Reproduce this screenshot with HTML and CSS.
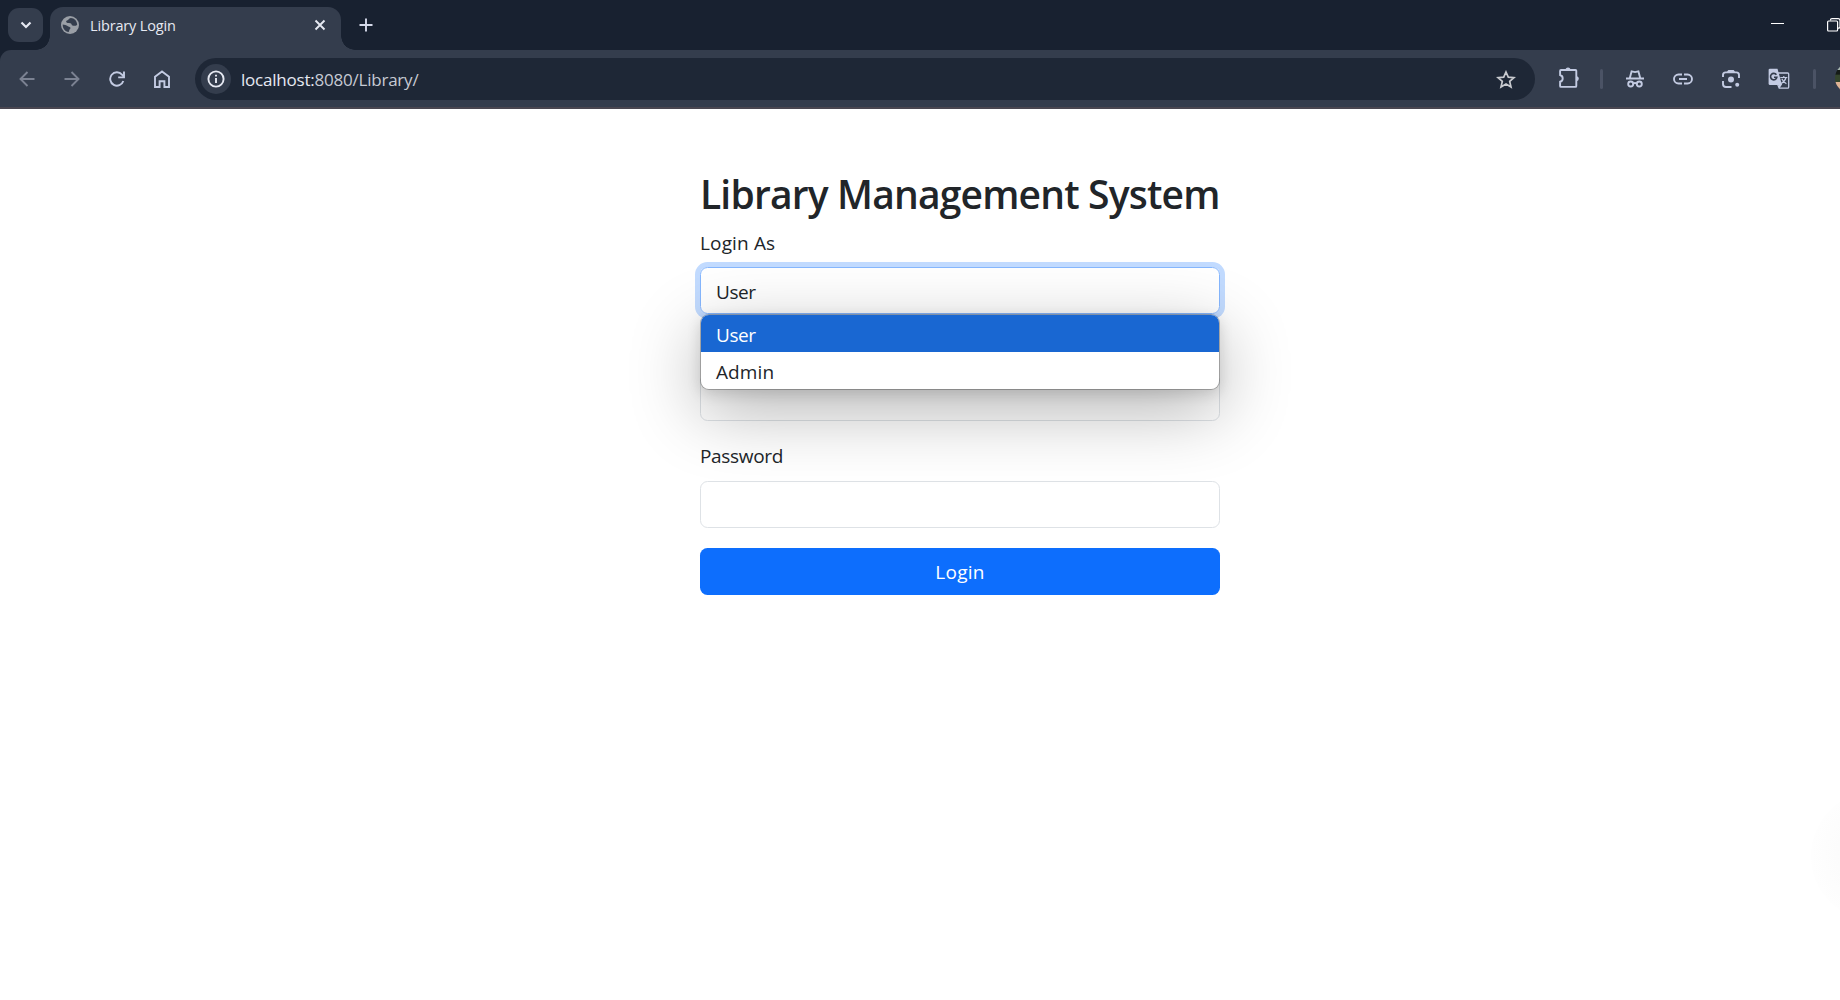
FILE: index.html
```html
<!DOCTYPE html>
<html lang="en">
<head>
<meta charset="utf-8">
<title>Library Login</title>
<link rel="stylesheet" href="styles.css">
</head>
<body>
<header class="browser">
  <div class="tabstrip">
    <div class="tab-search"><svg width="12" height="8" viewBox="0 0 12 8"><path d="M1.5 1.5 6 6l4.500-4.500" fill="none" stroke="#e6e9f2" stroke-width="2.200"/></svg></div>
    <div class="tab">
      <svg class="favicon" width="18" height="18" viewBox="0 0 18 18"><circle cx="9" cy="9" r="9" fill="#9a9fa6"/><path d="M9.800 2C7.500 2.200 7.800 4 6 4.600 4.600 5 5 6.800 6.600 7c2 .2 3.600-.3 4 1.500.4 1.300 2 1.400 3.400 1.300 1 0 1.800-.5 2.200-1C16 5 13.500 2.200 9.800 2ZM1.700 8.500c1.600.6 3.900.5 4.800 1.500.8 1 2.500.7 3 1.800.3.900-1 1.400-1.200 2.300-.1.900-.3 1.600-.7 2C4 15.500 1.600 12.500 1.700 8.500Z" fill="#343d4d"/></svg>
      <span class="tab-title">Library Login</span>
      <svg class="close" width="12" height="12" viewBox="0 0 12 12"><path d="M1.500 1.500l9 9M10.500 1.500l-9 9" stroke="#e6e9f2" stroke-width="1.900"/></svg>
    </div>
    <svg class="new-tab" width="14" height="14" viewBox="0 0 14 14"><path d="M7 .5v13M.5 7h13" stroke="#d5daea" stroke-width="1.900"/></svg>
    <div class="window-controls">
      <svg class="minimize" width="13" height="1" viewBox="0 0 13 1"><path d="M0 .5h13" stroke="#fff"/></svg>
      <svg class="restore" width="16" height="14" viewBox="0 0 16 14"><path d="M3.500 2.500V2Q3.500.7 5 .7h6q2 0 2 2v6q0 1.500-2 1.500" fill="none" stroke="#fff" stroke-width="1.200"/><rect x=".6" y="3" width="10" height="10" rx="1" fill="#182130" stroke="#fff" stroke-width="1.200"/></svg>
    </div>
  </div>
  <div class="toolbar">
    <div class="nav dim"><svg width="16" height="16" viewBox="0 0 16 16"><path d="M15.500 8H1.800M8.500 1 1.500 8l7 7"/></svg></div>
    <div class="nav dim"><svg width="16" height="16" viewBox="0 0 16 16"><path d="M.5 8h13.700M7.500 1l7 7-7 7"/></svg></div>
    <div class="nav"><svg width="16" height="16" viewBox="0 0 16 16"><path d="M14.300 10A6.700 6.700 0 1 1 13 3.600l1.500 1.800"/><path d="M15 .5V6.400H9.200" /></svg></div>
    <div class="nav"><svg width="16" height="18" viewBox="0 0 16 18"><path d="M1 6.800 8 1.400l7 5.400V17h-4.600v-5.800H5.600V17H1Z"/></svg></div>
    <div class="omnibox">
      <div class="site-info"><svg width="18" height="18" viewBox="0 0 18 18"><circle cx="9" cy="9" r="7.600"/><path d="M9 8v5M9 4.700v1.800"/></svg></div>
      <span class="url"><span class="host">localhost:</span>8080/Library/</span>
      <svg class="star" width="20" height="19" viewBox="0 0 20 19"><path d="M10 2l2.300 5.200 5.700.5-4.300 3.700 1.300 5.600-5-3-5 3 1.300-5.600L2 7.700l5.700-.5Z"/></svg>
    </div>
    <div class="action ext"><svg width="22" height="22" viewBox="0 0 22 22"><path d="M3 3h14.500q.8 0 .8.800V19q0 .9-.8.900H3q-.9 0-.9-.9v-4.200q2.600-.6 2.600-3.300T2.100 8V3.900Q2.100 3 3 3Z"/><path d="M7.500 3a2.500 2.500 0 0 1 5 0ZM18.300 9.200a2.500 2.500 0 0 1 0 5Z" class="solid"/></svg></div>
    <i class="rule"></i>
    <div class="action"><svg width="20" height="20" viewBox="0 0 20 20"><path d="M1 9.500h18M4.800 9 6.600 2.400l3.400.7 3.400-.7L15.200 9"/><circle cx="5.700" cy="15" r="2.500"/><circle cx="14.300" cy="15" r="2.500"/><path d="M8.300 14.500q1.700-1 3.400 0"/></svg></div>
    <div class="action"><svg width="20" height="12" viewBox="0 0 20 12"><path d="M9 1.500H5.500a4.500 4.500 0 0 0 0 9H9M11 1.500h3.500a4.500 4.500 0 0 1 0 9H11M6 6h8"/></svg></div>
    <div class="action"><svg width="20" height="20" viewBox="0 0 20 20"><path d="M2 8V6q0-2.600 2.600-2.600h10.800Q18 3.400 18 6v3M2 12v3q0 3 3 3h5.500M6.500 3.400 7.800 2h4.400l1.300 1.400"/><circle cx="10" cy="10.500" r="3" class="solid"/><circle cx="16.200" cy="15.800" r="2" class="solid"/></svg></div>
    <div class="action"><svg width="22" height="22" viewBox="0 0 22 22"><path d="M10 5h9.700q1 0 1 1v13q0 1.200-1 1.200h-8.500L9.500 16" stroke-width="1.300"/><path d="M2 .8h7.500L14 17H2Q.6 17 .6 15.500V2Q.6.800 2 .8Z" class="solid"/><path d="M10.500 16.500h3.500l-2.600 4Z" class="solid"/><path d="M8.400 6.800A3.200 3.200 0 1 0 8.900 9.200H6" class="cut"/><path d="M12.300 9.500h7M15.800 8v1.500M18 9.500q-1 4-5 6M13.800 10.800q1.500 3.400 4.600 5" class="thin"/></svg></div>
    <i class="rule last"></i>
    <div class="avatar"></div>
  </div>
</header>
<main class="page">
  <form class="login">
    <h1>Library Management System</h1>
    <label class="lbl-as">Login As</label>
    <div class="field select">User
      <div class="options">
        <div class="option selected">User</div>
        <div class="option admin">Admin</div>
      </div>
    </div>
    <label class="covered"></label>
    <div class="field"></div>
    <label class="lbl-pw">Password</label>
    <div class="field"></div>
    <button type="button" class="submit">Login</button>
  </form>
  <div class="halo"></div>
</main>
</body>
</html>
```
FILE: styles.css
```css
* { box-sizing: border-box; }
body {
  margin: 0;
  height: 1000px;
  overflow: hidden;
  display: flex;
  flex-direction: column;
  background: #fff;
  font-family: "Open Sans", "Noto Sans", sans-serif;
  color: #212529;
}
svg { display: block; flex: none; }

.browser { height: 109px; flex: none; background: #182130; overflow: hidden; }
.tabstrip { height: 50px; display: flex; align-items: center; padding-left: 8px; }
.tab-search {
  width: 35px; height: 34px; border-radius: 11px; background: #343d4d;
  display: flex; align-items: center; justify-content: center; padding-left: 1px;
}
.tab {
  position: relative;
  width: 291px; height: 43px; margin: 7px 0 0 7px; padding: 0 15px 7px 11px;
  background: #343d4d; border-radius: 13px 13px 0 0;
  display: flex; align-items: center;
}
.tab::before, .tab::after {
  content: ""; position: absolute; bottom: 0; width: 14px; height: 14px;
}
.tab::before { left: -14px; background: radial-gradient(circle at 0 0, transparent 13.500px, #343d4d 14px); }
.tab::after { right: -14px; background: radial-gradient(circle at 100% 0, transparent 13.500px, #343d4d 14px); }
.tab-title { margin-left: 11px; padding-top: 2px; font-size: 14.500px; letter-spacing: -.15px; line-height: 20px; color: #e6e9f2; white-space: nowrap; flex: 1; }
.new-tab { margin-left: 18px; }
.window-controls { margin-left: auto; width: 69px; display: flex; align-items: center; gap: 43px; }
.minimize { margin-bottom: 3px; }

.toolbar {
  height: 59px; width: 1880px; padding: 0 0 2px 5px;
  background: #343d4d; border-bottom: 2px solid #4a4751; border-radius: 11px 0 0 0;
  display: flex; align-items: center;
}
.toolbar svg { fill: none; stroke: #c3cbe2; stroke-width: 1.900; }
.toolbar svg .solid { fill: #c3cbe2; stroke: none; }
.toolbar svg .cut { stroke: #343d4d; stroke-width: 1.600; }
.toolbar svg .thin { stroke-width: 1.200; }
.nav { width: 45px; flex: none; display: flex; justify-content: center; padding: 2px 1px 0 0; }
.toolbar .dim svg { stroke: #7b8292; }
.omnibox {
  width: 1340px; height: 42px; flex: none; margin: 3px 0 0 10px; padding: 0 19px 0 6px;
  border-radius: 21px; background: #1e2736;
  display: flex; align-items: center;
}
.site-info { width: 30px; height: 30px; border-radius: 50%; background: #343d4d; display: flex; align-items: center; justify-content: center; }
.toolbar .site-info svg { stroke: #e6e9f2; }
.url { flex: 1; margin-left: 10px; padding-top: 2px; font-size: 17px; letter-spacing: -.22px; line-height: 24px; color: #c6cad3; }
.host { color: #e6e9f2; }
.toolbar .star { stroke: #c8cacf; stroke-width: 1.700; }
.action { width: 48px; flex: none; display: flex; justify-content: center; padding-top: 3px; }
.ext { width: 46px; margin-left: 10px; padding: 1px 0 0 2px; }
.rule { width: 3px; height: 20px; flex: none; margin: 2px 8px 0 9px; border-radius: 2px; background: #4b5365; }
.rule.last { margin: 2px 9px 0 10px; }
.avatar {
  width: 30px; height: 30px; flex: none; margin-left: 10px; border-radius: 50%;
  background: linear-gradient(#a7b7b0 0 22%, #151b16 23% 38%, #34452c 39% 62%, #e0b394 63%);
}

.page { position: relative; flex: 1; overflow: hidden; padding-top: 60px; }
.login { width: 520px; margin-left: 700px; display: flex; flex-direction: column; }
h1 { height: 48px; margin: 0 0 10px; font-size: 39px; line-height: 50px; font-weight: 600; letter-spacing: -.82px; white-space: nowrap; }
label { height: 30px; margin-bottom: 10px; font-size: 19px; line-height: 31px; letter-spacing: -.32px; }
.lbl-as { line-height: 32px; letter-spacing: .15px; }
.field {
  height: 47px; margin-bottom: 20px; padding: 0 15px;
  border: 1px solid #dee2e6; border-radius: 7.500px;
  font-size: 19px; line-height: 48px; letter-spacing: -.4px;
}
.select { position: relative; border-color: #86b7fe; box-shadow: 0 0 0 5px #c2dbff; }
.options {
  position: absolute; z-index: 1; top: 46px; left: -1px; width: 520px; height: 76px;
  border: 1px solid rgba(0, 0, 0, .25); background: #fff; background-clip: padding-box;
  border-radius: 9px; overflow: hidden;
  box-shadow: 0 4px 14px rgba(0, 0, 0, .13), 0 20px 70px rgba(0, 0, 0, .3);
}
.option { height: 37px; padding-left: 15px; line-height: 40px; }
.admin { letter-spacing: .1px; }
.selected { background: #1967d2; color: #fff; }
.submit {
  height: 47px; padding: 2px 0 0; border: 0; border-radius: 7.500px; background: #0d6efd;
  color: #fff; font: 19px/43px "Open Sans", "Noto Sans", sans-serif; letter-spacing: .25px;
}
.halo {
  position: absolute; left: 1811px; top: 682px; width: 130px; height: 130px; border-radius: 50%;
  background: radial-gradient(circle, #f9f9f9, #fefefe 70%);
}
```
